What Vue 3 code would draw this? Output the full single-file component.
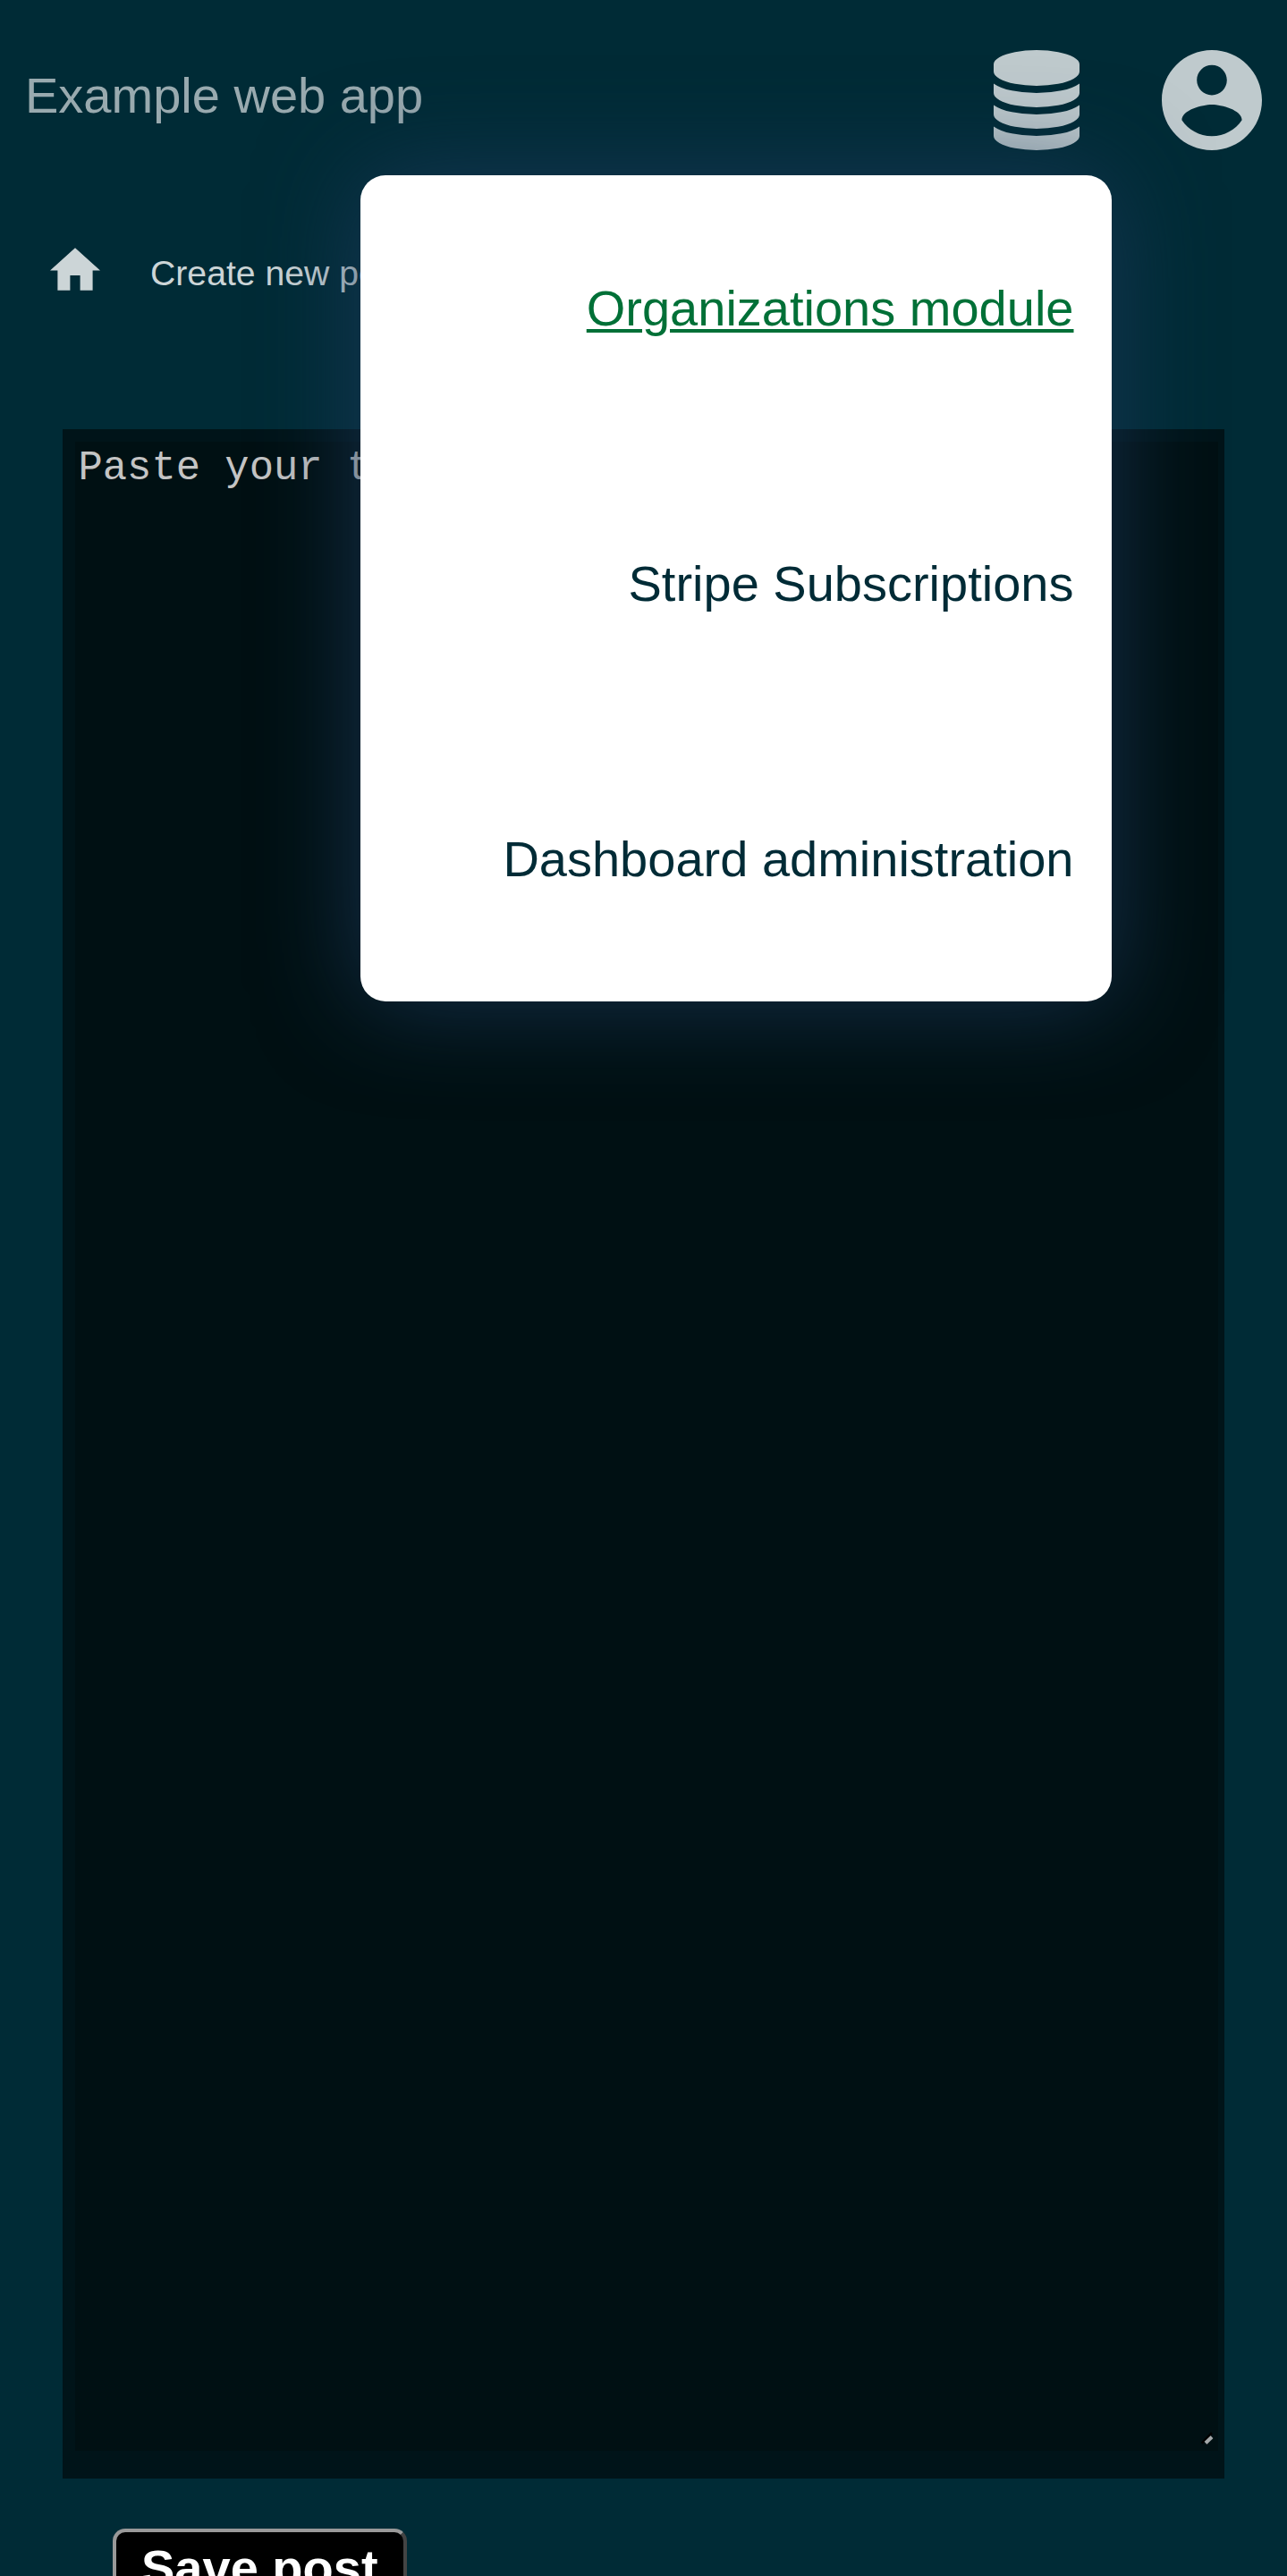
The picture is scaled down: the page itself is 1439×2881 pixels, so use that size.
<script setup>
const menuItems = [
  { label: 'Organizations module', active: true },
  { label: 'Stripe Subscriptions', active: false },
  { label: 'Dashboard administration', active: false },
]
</script>

<template>
  <div class="page">
    <header class="topbar">
      <a class="brand">Example web app</a>
      <div class="actions">
        <div class="modules">
          <svg class="db-icon" viewBox="0 0 1536 1792" fill="currentColor">
            <path d="M768 768q237 0 443-43t325-127v170q0 69-103 128t-280 93.5-385 34.5-385-34.5-280-93.5-103-128v-170q119 84 325 127t443 43zm0 768q237 0 443-43t325-127v170q0 69-103 128t-280 93.5-385 34.5-385-34.5-280-93.5-103-128v-170q119 84 325 127t443 43zm0-384q237 0 443-43t325-127v170q0 69-103 128t-280 93.5-385 34.5-385-34.5-280-93.5-103-128v-170q119 84 325 127t443 43zm0-1152q208 0 385 34.5t280 93.5 103 128v128q0 69-103 128t-280 93.5-385 34.5-385-34.5-280-93.5-103-128v-128q0-69 103-128t280-93.5 385-34.5z" />
          </svg>
          <nav class="menu">
            <a v-for="item in menuItems" :key="item.label" class="menu-item" :class="{ active: item.active }">{{ item.label }}</a>
          </nav>
        </div>
        <svg class="user-icon" viewBox="2 2 20 20" fill="currentColor">
          <path d="M12 2C6.48 2 2 6.48 2 12s4.48 10 10 10 10-4.48 10-10S17.52 2 12 2zm0 3c1.66 0 3 1.34 3 3s-1.34 3-3 3-3-1.34-3-3 1.34-3 3-3zm0 14.2c-2.5 0-4.71-1.28-6-3.22.03-1.99 4-3.08 6-3.08 1.99 0 5.97 1.09 6 3.08-1.29 1.94-3.5 3.22-6 3.22z" />
        </svg>
      </div>
    </header>

    <div class="breadcrumbs">
      <svg class="home-icon" viewBox="2 3 20 17" fill="currentColor">
        <path d="M10 20v-6h4v6h5v-8h3L12 3 2 12h3v8z" />
      </svg>
      <span class="crumb">Create new post</span>
    </div>

    <main class="editor">
      <div class="field">
        <span class="placeholder">Paste your text here</span>
        <svg class="grip" viewBox="0 0 14 14">
          <path d="M0.5 12.5L12 1" stroke="#000" stroke-width="2.5" />
          <path d="M5 12.3L12 5.5" stroke="#a5a9aa" stroke-width="4" />
        </svg>
      </div>
    </main>
    <button class="save">Save post</button>
  </div>
</template>

<style>
body {
  background: #002b36;
  overflow: hidden;
}
</style>

<style scoped>
.page {
  box-sizing: border-box;
  height: 2881px;
  overflow: hidden;
  background: #002b36;
  font-family: "Liberation Sans", Arial, sans-serif;
  font-size: 56px;
}

.topbar {
  box-sizing: border-box;
  display: flex;
  justify-content: space-between;
  align-items: flex-start;
  height: 224px;
  padding: 56px 28.5px 0 28px;
}

.brand {
  margin-top: 19px;
  line-height: 64px;
  color: #99aaaf;
}

.actions {
  display: flex;
  gap: 92px;
  color: #bfcacd;
}

.modules {
  position: relative;
  height: 112px;
}

.db-icon {
  display: block;
  width: 96px;
  height: 112px;
}

.user-icon {
  display: block;
  width: 112px;
  height: 112px;
}

.menu {
  position: absolute;
  z-index: 2;
  top: 140px;
  right: -36px;
  width: 840px;
  border-radius: 28px;
  background: #fff;
  box-shadow: 0 0 112px rgba(28, 57, 91, 0.8);
}

.menu-item {
  box-sizing: border-box;
  display: block;
  height: 308px;
  padding-right: 42px;
  line-height: 297px;
  text-align: right;
  white-space: nowrap;
  color: #002b36;
}

.menu-item.active {
  color: #007037;
  text-decoration: underline;
  text-decoration-thickness: 4px;
  text-underline-offset: 4px;
}

.breadcrumbs {
  box-sizing: border-box;
  display: flex;
  align-items: flex-start;
  height: 255.5px;
  padding: 53px 56px 0;
  gap: 56px;
  color: #ccd5d7;
}

.home-icon {
  width: 56px;
  height: 48px;
}

.crumb {
  margin-top: 7px;
  line-height: 44px;
  font-size: 39.2px;
}

.editor {
  box-sizing: border-box;
  width: 1299px;
  height: 2292px;
  margin-left: 70px;
  padding: 14px 7px 31px 14px;
  background: #001419;
}

.field {
  box-sizing: border-box;
  display: flex;
  justify-content: space-between;
  height: 100%;
  padding: 4px 5px 6.5px 3.5px;
  background: #001013;
}

.placeholder {
  font-family: "Liberation Mono", monospace;
  font-size: 45.5px;
  line-height: 52px;
  color: #c4c4c4;
}

.grip {
  align-self: flex-end;
  width: 14px;
  height: 14px;
}

.save {
  display: block;
  margin: 56px 0 0 126px;
  height: 88px;
  padding: 0 28px;
  border: 4px solid;
  border-color: #999 #444 #444 #999;
  border-radius: 14px;
  background: #000;
  color: #fff;
  font: bold 56px "Liberation Sans", Arial, sans-serif;
  white-space: nowrap;
}
</style>
